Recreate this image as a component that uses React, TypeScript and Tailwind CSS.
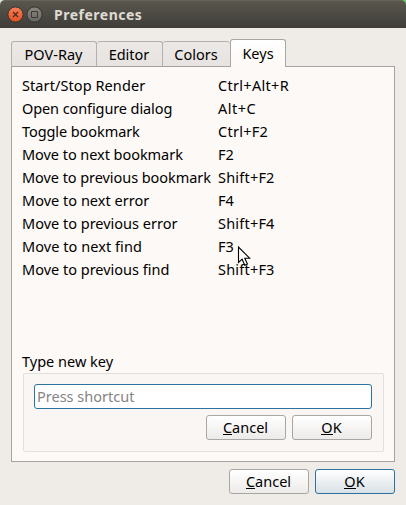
import React from "react";

const shortcuts = [
  { action: "Start/Stop Render", keys: "Ctrl+Alt+R", a: "tracking-[0.08px]", k: "tracking-[0.3px]" },
  { action: "Open configure dialog", keys: "Alt+C", a: "tracking-[-0.1px]", k: "tracking-[0.5px]" },
  { action: "Toggle bookmark", keys: "Ctrl+F2", a: "tracking-[-0.08px]", k: "tracking-[0.25px]" },
  { action: "Move to next bookmark", keys: "F2", a: "tracking-[-0.05px]", k: "tracking-[0px]" },
  { action: "Move to previous bookmark", keys: "Shift+F2", a: "tracking-[-0.06px]", k: "tracking-[0.2px]" },
  { action: "Move to next error", keys: "F4", a: "tracking-[0.02px]", k: "tracking-[0px]" },
  { action: "Move to previous error", keys: "Shift+F4", a: "tracking-[0px]", k: "tracking-[0.2px]" },
  { action: "Move to next find", keys: "F3", a: "tracking-[0.06px]", k: "tracking-[0px]" },
  { action: "Move to previous find", keys: "Shift+F3", a: "tracking-[0px]", k: "tracking-[0.2px]" },
];

function TitleBar() {
  return (
    <header className="flex h-7 items-center rounded-t-[5px] border-t border-[#65635a] bg-linear-to-b from-[#59574d] to-[#3e3d39] pl-[7px]">
      <svg width="36" height="17" viewBox="0 0 36 17" className="shrink-0">
        <defs>
          <linearGradient id="close" x2="0" y2="1">
            <stop offset="0" stopColor="#f58059" />
            <stop offset="1" stopColor="#e4511f" />
          </linearGradient>
          <linearGradient id="max" x2="0" y2="1">
            <stop offset="0" stopColor="#8a877e" />
            <stop offset="1" stopColor="#686660" />
          </linearGradient>
        </defs>
        <circle cx="8.5" cy="8.5" r="7.6" fill="url(#close)" stroke="#36342f" />
        <path d="M6 6l5 5M11 6l-5 5" stroke="#4b291d" strokeWidth="1.2" />
        <circle cx="27.5" cy="8.5" r="7.6" fill="url(#max)" stroke="#36342f" />
        <path d="M24.5 5.5h6v6h-6z" fill="none" stroke="#3b3a36" strokeWidth="1" />
      </svg>
      <h1 className="ml-[11px] text-[14px] leading-none font-bold tracking-[0.5px] text-[#dfdbd2]">Preferences</h1>
    </header>
  );
}

function Button({ hot, rest, primary }: { hot: string; rest: string; primary?: boolean }) {
  return (
    <button
      className={
        "flex h-[25px] w-20 items-center justify-center rounded-[3px] border bg-linear-to-b pr-px pb-px leading-none " +
        (primary ? "border-[#2a729f] from-white to-[#d8e1e6]" : "border-[#aaa6a3] from-white to-[#edebe9]")
      }
    >
      <span className="h-[15px] border-b border-black">{hot}</span>
      <span className="h-[15px]">{rest}</span>
    </button>
  );
}

function Tab({ label, className }: { label: string; className: string }) {
  return (
    <div className={"flex h-[25px] items-center justify-center rounded-t-[3px] border-t border-r border-[#b4b0ad] bg-linear-to-b from-[#ebe8e6] to-[#e6e3e1] pr-px leading-none " + className}>
      {label}
    </div>
  );
}

export default function App() {
  return (
    <div className="h-[505px] w-[406px] overflow-hidden bg-[linear-gradient(90deg,#dfe3df_50%,#5fd35f_50%)] font-['Noto_Sans',sans-serif] text-[14.5px] text-black">
      <TitleBar />
      <main className="h-[477px] bg-[#efebe7] px-[11px] pt-[11px]">
        <nav className="flex h-[27px] items-end">
          <Tab label="POV-Ray" className="w-[86px] border-l" />
          <Tab label="Editor" className="w-[66px]" />
          <Tab label="Colors" className="w-[67px] border-r-0" />
          <div className="z-10 -mb-px flex h-7 w-14 items-center justify-center rounded-t-[3px] border border-b-0 border-[#aaa6a3] bg-linear-to-b from-white to-[#fdf9f6] pb-px leading-none">
            Keys
          </div>
        </nav>
        <section className="flex h-[396px] w-96 flex-col border border-[#a6a29f] bg-[#fdf9f6] px-[10px] pt-[7px]">
          <div>
            {shortcuts.map((s) => (
              <div key={s.action} className="flex h-[23px] items-center leading-none whitespace-nowrap">
                <span className={"w-[196px] " + s.a}>{s.action}</span>
                <span className={s.k}>{s.keys}</span>
              </div>
            ))}
          </div>
          <div className="mt-[69px] flex h-[23px] items-center leading-none">Type new key</div>
          <div className="ml-px flex h-[79px] w-[361px] flex-col rounded-[2px] border border-[#e3dfdc] bg-[#faf6f3] pt-[10px] pr-[11px] pl-[10px]">
            <input
              placeholder="Press shortcut"
              className="h-[25px] w-[338px] rounded-[3px] border border-[#2a729f] bg-white px-[2px] pb-px leading-none outline-none placeholder:text-[#858585]"
            />
            <div className="mt-[6px] flex justify-end gap-[6px]">
              <Button hot="C" rest="ancel" />
              <Button hot="O" rest="K" />
            </div>
          </div>
        </section>
        <footer className="mt-[7px] flex justify-end gap-[6px]">
          <Button hot="C" rest="ancel" />
          <Button hot="O" rest="K" primary />
        </footer>
      </main>
      <svg className="absolute top-[246px] left-[237px]" width="14" height="21" viewBox="0 0 14 21">
        <path d="M1.5 1v15.5l3.6-3.3 2.7 6 2.6-1.2-2.6-5.8h4.8z" fill="#fff" stroke="#000" strokeWidth="1.1" />
      </svg>
    </div>
  );
}
